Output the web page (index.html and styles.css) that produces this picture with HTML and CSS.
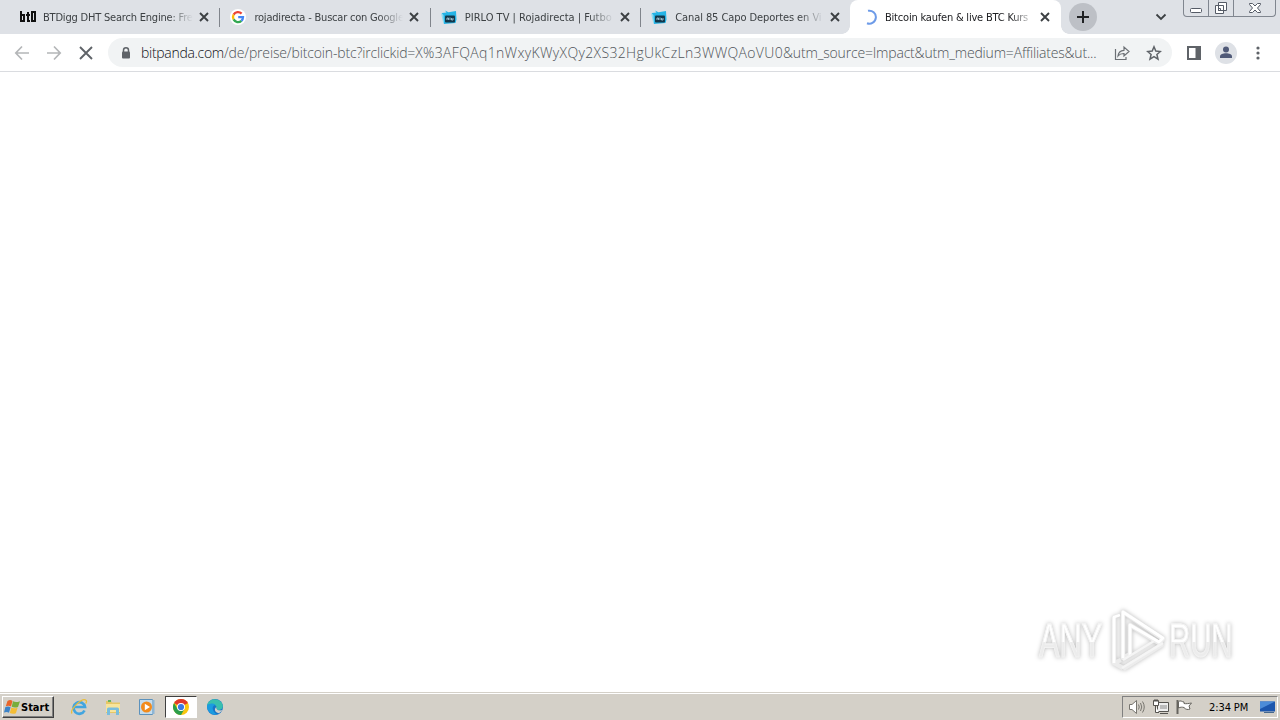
FILE: index.html
```html
<!DOCTYPE html>
<html lang="de">
<head>
    <meta charset="UTF-8">
    <title>Bitcoin kaufen &amp; live BTC Kurs</title>
    <link rel="stylesheet" href="styles.css">
</head>
<body>
    <svg class="defs" width="0" height="0">
        <symbol id="close" viewBox="0 0 10 10"><path d="M1 1l8 8M9 1l-8 8" fill="none" stroke="#3c4043" stroke-width="1.9"/></symbol>
        <symbol id="tv" viewBox="0 0 16 16">
            <path d="M1 4l4.500-.5L4 1.500l3.500 1.700L15 2l.5 8.500-1 3.500L3 15z" fill="#25b4e6"/>
            <path d="M0 4l2 9 1 2-.5-9z" fill="#8cdcf2"/>
            <rect x="4" y="6.500" width="10" height="7" rx="1" fill="#12374b"/>
            <path d="M6 11V9h1.500v2M9 8.500v2.500M10.500 9v2h1.500V9" fill="none" stroke="#b5d5e2" stroke-width=".8"/>
        </symbol>
    </svg>

    <div class="browser">
        <div class="tab-strip">
            <div class="tab">
                <svg class="favicon" viewBox="0 0 16 16"><path d="M1 2v10h3V6H1M8 3v9h2M6 6h4M12 3h3v9h-3z" fill="none" stroke="#111" stroke-width="2"/></svg>
                <span class="tab-title t1">BTDigg DHT Search Engine: Fre</span>
                <svg class="tab-close"><use href="#close"/></svg>
            </div>
            <div class="tab">
                <svg class="favicon" viewBox="0 0 16 16">
                    <circle cx="8" cy="8" r="8" fill="#fff"/>
                    <g fill="none" stroke-width="2.300">
                        <path d="M11.600 4.600A5 5 0 0 0 3.600 5.600" stroke="#ea4335"/>
                        <path d="M3.600 5.600a5 5 0 0 0 0 4.800" stroke="#fbbc05"/>
                        <path d="M3.600 10.400a5 5 0 0 0 7.800 1.400" stroke="#34a853"/>
                        <path d="M11.400 11.800A5 5 0 0 0 13 8.200H8.200" stroke="#4285f4"/>
                    </g>
                </svg>
                <span class="tab-title t2">rojadirecta - Buscar con Google</span>
                <svg class="tab-close"><use href="#close"/></svg>
            </div>
            <div class="tab">
                <svg class="favicon"><use href="#tv"/></svg>
                <span class="tab-title t3">PIRLO TV | Rojadirecta | Futbo</span>
                <svg class="tab-close"><use href="#close"/></svg>
            </div>
            <div class="tab">
                <svg class="favicon"><use href="#tv"/></svg>
                <span class="tab-title t4">Canal 85 Capo Deportes en Vi</span>
                <svg class="tab-close"><use href="#close"/></svg>
            </div>
            <div class="tab active">
                <svg class="favicon" viewBox="0 0 16 16"><path d="M6 1.800A6.500 6.500 0 1 1 5 14.200" fill="none" stroke="#6d9be8" stroke-width="2"/></svg>
                <span class="tab-title t5">Bitcoin kaufen &amp; live BTC Kurs</span>
                <svg class="tab-close"><use href="#close"/></svg>
            </div>
            <div class="new-tab">
                <svg width="14" height="14" viewBox="0 0 14 14"><path d="M7 1v12M1 7h12" stroke="#202124" stroke-width="2"/></svg>
            </div>
            <svg class="tab-search" width="12" height="8" viewBox="0 0 12 8"><path d="M1.500 1.500L6 6l4.500-4.500" fill="none" stroke="#3c4043" stroke-width="1.800"/></svg>
            <div class="window-controls">
                <div class="control"><svg width="14" height="14" viewBox="0 0 14 14"><rect x="1.500" y="7.500" width="11" height="4" rx="1" fill="#fff" stroke="#555b66"/></svg></div>
                <div class="control"><svg width="14" height="14" viewBox="0 0 14 14"><path d="M4.500 1.500h8v8h-8zM1.500 4.500h8v8h-8zM4.500 7.500h2v2h-2z" fill="#fff" stroke="#555b66"/></svg></div>
                <div class="control wide"><svg width="14" height="14" viewBox="0 0 14 14"><path d="M1.500 2.500h3L7 5l2.500-2.500h3v1L9.500 7l3 3.500v1h-3L7 9l-2.500 2.500h-3v-1l3-3.500-3-3.500z" fill="#fff" stroke="#555b66"/></svg></div>
            </div>
        </div>

        <div class="toolbar">
            <svg class="nav" viewBox="0 0 16 16"><path d="M15 8H2M8 1.500L1.800 8 8 14.500" fill="none" stroke="#b4b6b8" stroke-width="1.700"/></svg>
            <svg class="nav" viewBox="0 0 16 16"><path d="M1 8h13M8 1.500L14.200 8 8 14.500" fill="none" stroke="#b4b6b8" stroke-width="1.700"/></svg>
            <svg class="nav" viewBox="0 0 16 16"><path d="M2 2l12 12M14 2L2 14" fill="none" stroke="#5f6368" stroke-width="1.900"/></svg>
            <div class="address-bar">
                <svg class="lock" width="10" height="12" viewBox="0 0 10 12"><path d="M2.500 5V3.300a2.500 2.500 0 0 1 5 0V5" fill="none" stroke="#5f6368" stroke-width="1.500"/><rect x="1" y="4.500" width="8" height="7" rx="1" fill="#5f6368"/></svg>
                <div class="url"><span class="host">bitpanda.com</span><span class="path">/de/preise/bitcoin-btc?irclickid=</span><span class="click-id">X%3AFQAq1nWxyKWyXQy2XS32HgUkCzLn3WWQAoVU0</span><span class="utm">&amp;utm_source=Impact&amp;utm_medium=Affiliates&amp;ut...</span></div>
                <svg class="share" width="16" height="16" viewBox="0 0 16 16"><path d="M1.500 4v10.500H12V12M4 11c.3-3.800 2.300-5.500 6-5.700V2L15 6.500 10 11V8.500C7.500 8.400 5.600 9 4 11z" fill="none" stroke="#6b6f74" stroke-width="1.200"/></svg>
                <svg class="star" width="16" height="16" viewBox="0 0 16 16"><path d="M8 1.800l1.800 4.300 4.600.4-3.500 3 1.100 4.600L8 11.700l-4 2.400 1.100-4.600-3.500-3 4.600-.4z" fill="none" stroke="#5f6368" stroke-width="1.500"/></svg>
            </div>
            <svg class="panel" width="14" height="14" viewBox="0 0 14 14"><path d="M1 1h12v12H1z" fill="none" stroke="#5f6368" stroke-width="2"/><path d="M8.500 1H13v12H8.500z" fill="#5f6368"/></svg>
            <svg class="profile" width="22" height="22" viewBox="0 0 22 22"><circle cx="11" cy="11" r="11" fill="#dee1e6"/><circle cx="11" cy="7.500" r="3" fill="#505a78"/><path d="M5 16v-1.500c0-2 3-3.200 6-3.200s6 1.200 6 3.200V16z" fill="#505a78"/></svg>
            <svg class="menu" width="4" height="14" viewBox="0 0 4 14"><g fill="#5f6368"><circle cx="2" cy="2" r="1.600"/><circle cx="2" cy="7" r="1.600"/><circle cx="2" cy="12" r="1.600"/></g></svg>
        </div>

        <div class="page">
            <div class="watermark">
                <span class="mark-text any">ANY</span>
                <svg class="mark-logo" width="58" height="64" viewBox="0 0 58 64">
                    <g fill="none" stroke-linejoin="round">
                        <path d="M14 4v46l7-4V17l29 18 4-4zM5 9v46l7-3M14 61l40-25M5 55l9 5" stroke="#ececec" stroke-width="4.500"/>
                        <path d="M14 50V4l40 26-4 4-29-17v30M5 55V9l6-2" stroke="#fff" stroke-width="2.800"/>
                        <path d="M13 60l41-25M14 52l31-19" stroke="#f5f5f5" stroke-width="2.500"/>
                    </g>
                </svg>
                <span class="mark-text run">RUN</span>
            </div>
        </div>
    </div>

    <div class="taskbar">
        <div class="start">
            <svg width="17" height="16" viewBox="0 0 17 16">
                <path d="M3.500 2c2-1.300 3.500-1.100 5-.1L7 7.500c-1.700-1-3.400-1-5.200-.2z" fill="#e9652a"/>
                <path d="M9 2.300c2 1 4 1 7-.1l-2 5.800c-2.300.8-4.200.7-6.300-.2z" fill="#78ad3c"/>
                <path d="M1.400 8c2-.8 3.700-.7 5.200.2L5 13.800c-1.500-1-3.200-1-5-.2z" fill="#3c83c8"/>
                <path d="M7.400 8.600c2 1 3.900 1 6.200.1l-1.700 5.600c-2.200.8-4.200.7-6.100-.3z" fill="#f4bd35"/>
            </svg>
            <span>Start</span>
        </div>
        <div class="launchers">
            <div class="launcher">
                <svg width="18" height="18" viewBox="0 0 18 18"><path d="M14.500 12.500A5.800 5.800 0 1 1 15 9H5" fill="none" stroke="#42a5df" stroke-width="2.700"/><path d="M2 15.500C-.5 12 12-1 16 2.200c.8.600.5 2-.2 3.300" fill="none" stroke="#e8bd3c" stroke-width="1.300"/></svg>
            </div>
            <div class="launcher">
                <svg width="18" height="18" viewBox="0 0 18 18"><path d="M2 3h5l1 1.500h8V15H2z" fill="#e6c766"/><path d="M4 2h3v2H4z" fill="#66b35e"/><path d="M2 6h14v8H2z" fill="#f7e49b"/><path d="M3 17v-6q0-1.500 1.500-1.500h9q1.500 0 1.500 1.500v6h-3v-5H6v5z" fill="#79bddd"/></svg>
            </div>
            <div class="launcher">
                <svg width="18" height="18" viewBox="0 0 18 18"><path d="M1.500 1.500h13v15h-13z" fill="#c4dced" stroke="#5c92bd"/><path d="M14 2h2.500v14H14z" fill="#8db5d4"/><circle cx="8.500" cy="9" r="5.500" fill="#f28b1c"/><path d="M6.800 5.800v6.400L12 9z" fill="#fff"/></svg>
            </div>
            <div class="launcher pressed">
                <svg width="16" height="16" viewBox="0 0 16 16"><circle cx="8" cy="8" r="8" fill="#f9c60f"/><path d="M8 8L1.070 4A8 8 0 0 1 14.930 4z" fill="#df382c"/><path d="M1.070 4A8 8 0 0 0 8 16l3.500-6H4.500z" fill="#2b9e4b"/><circle cx="8" cy="8" r="4" fill="#fff"/><circle cx="8" cy="8" r="3.100" fill="#3979e4"/></svg>
            </div>
            <div class="launcher">
                <svg width="16" height="16" viewBox="0 0 16 16"><circle cx="8" cy="8" r="8" fill="#1874c8"/><path d="M0 7C1-.500 10-2 14.500 3.500 17.500 8 15 11 11.500 11 9 11 9 9.800 9.600 9 10 6 4 3 0 7z" fill="#39bfae"/><path d="M0 7c2-3 6-3 8.500-1C5 6 4 12 10 15.700 4 16.500 0 12 0 7z" fill="#1b9ce0"/><path d="M9.500 8c-1 3 3 4 5.700 3-1 1.800-2.300 2.800-3.500 3.200C8 13.500 6.500 10 9.500 8z" fill="#d4d0c8"/></svg>
            </div>
        </div>
        <div class="tray">
            <svg width="18" height="16" viewBox="0 0 18 16"><path d="M1.500 5.500H4L8.500 1.500v13L4 10.500H1.500z" fill="#fff" stroke="#77756f"/><path d="M10.500 5.500q1.500 2.500 0 5M12.500 4q2.500 4 0 8M14.500 2.500q3.500 5.500 0 11" fill="none" stroke="#77756f"/></svg>
            <svg width="16" height="16" viewBox="0 0 16 16"><path d="M4.500 3.500h11v9h-11zM7 14.500h8" fill="#eee" stroke="#55534f"/><path d="M.5 1.500h5v5h-5zM2 0v3M4 0v3M2.500 6.500v7H6" fill="#fff" stroke="#55534f"/><path d="M7 6h7v4H7z" fill="#bbb"/></svg>
            <svg width="16" height="16" viewBox="0 0 16 16"><path d="M1.500 1v14" stroke="#66645f" stroke-width="2"/><path d="M2.500 2.500c2-1.500 3.500.3 5.500.5v1.500c2 .5 4.500 0 7.500-.5l-2.500 3 1 3c-2 1-4.500.5-6-1.500-2-.5-3.500-.5-5.500.5z" fill="#fff" stroke="#66645f"/></svg>
            <span class="clock">2:34 PM</span>
            <svg width="15" height="14" viewBox="0 0 15 14"><path d="M0 1.500h15v10H0z" fill="#1c56ad"/><path d="M0 1.500h15L0 9z" fill="#4c8cd8"/><path d="M4 12.500h10" stroke="#46688e"/></svg>
        </div>
    </div>
</body>
</html>
```
FILE: styles.css
```css
* {
    box-sizing: border-box;
}
body {
    margin: 0;
    width: 1280px;
    height: 720px;
    display: flex;
    flex-direction: column;
    overflow: hidden;
    background: #fff;
    font-family: "DejaVu Sans Condensed", "DejaVu Sans", sans-serif;
    font-stretch: condensed;
}
svg {
    display: block;
    flex: none;
}
.defs {
    position: absolute;
}
.browser {
    flex: 1;
    display: flex;
    flex-direction: column;
}
.tab-strip {
    display: flex;
    height: 34px;
    padding-left: 10px;
    background: #dee1e6;
}
.tab {
    display: flex;
    align-items: center;
    width: 210.4px;
    height: 34px;
    padding-left: 10px;
    flex: none;
    background: linear-gradient(#80848b, #80848b) right 8px / 1px 19px no-repeat;
}
.tab:nth-child(4) {
    background: none;
}
.tab.active {
    position: relative;
    width: 211px;
    margin-left: -1.6px;
    padding-left: 12px;
    background: #fff;
    border-radius: 8px 8px 0 0;
}
.tab.active::before,
.tab.active::after {
    content: "";
    position: absolute;
    bottom: 0;
    width: 8px;
    height: 8px;
}
.tab.active::before {
    left: -8px;
    background: radial-gradient(circle at 0 0, transparent 7.5px, #fff 8px);
}
.tab.active::after {
    right: -8px;
    background: radial-gradient(circle at 100% 0, transparent 7.5px, #fff 8px);
}
.favicon {
    width: 16px;
    height: 16px;
}
.tab-title {
    width: 150px;
    margin-left: 7px;
    white-space: nowrap;
    font-size: 11px;
    line-height: 16px;
    padding-top: 1px;
    color: #3c4043;
    letter-spacing: -0.2px;
    -webkit-mask-image: linear-gradient(to right, #000 125px, transparent 150px);
    mask-image: linear-gradient(to right, #000 125px, transparent 150px);
}
.t2 {
    padding-left: 1px;
}
.t3 {
    padding-left: 1px;
    letter-spacing: 0;
}
.t4 {
    padding-left: 1px;
    letter-spacing: -0.08px;
}
.active .tab-title {
    color: #202124;
}
.tab-close {
    width: 10px;
    height: 10px;
    margin-left: 6px;
}
.active .tab-close {
    margin-left: 5px;
}
.new-tab {
    display: flex;
    align-items: center;
    justify-content: center;
    width: 28px;
    height: 28px;
    margin: 3px 0 0 8px;
    border-radius: 50%;
    background: #bdc0c6;
}
.tab-search {
    margin: 13px 0 0 58px;
}
.window-controls {
    display: flex;
    width: 93px;
    height: 17px;
    margin: 0 4px 0 auto;
    border: 1px solid #80868f;
    border-top: 0;
    border-radius: 0 0 4px 4px;
}
.control {
    display: flex;
    justify-content: center;
    width: 25px;
    padding-top: 1px;
    border-right: 1px solid #80868f;
}
.control.wide {
    flex: 1;
    border-right: 0;
}
.toolbar {
    display: flex;
    align-items: center;
    height: 38px;
    padding: 0 0 0 14px;
    border-bottom: 1px solid #dadce0;
}
.nav {
    width: 16px;
    height: 16px;
    margin-right: 16px;
}
.address-bar {
    display: flex;
    align-items: center;
    flex: none;
    width: 1064px;
    height: 29px;
    margin-left: -2px;
    padding-left: 13px;
    border-radius: 15px;
    background: #f1f3f4;
}
.url {
    width: 958px;
    margin-left: 10px;
    white-space: nowrap;
    font-family: "Open Sans", "Noto Sans", sans-serif;
    font-size: 14px;
    font-weight: 300;
    font-stretch: normal;
    line-height: 20px;
    color: #4f5358;
}
.host {
    color: #101114;
    letter-spacing: -0.3px;
}
.path {
    letter-spacing: -0.15px;
}
.click-id {
    letter-spacing: 0.34px;
}
.utm {
    letter-spacing: -0.18px;
}
.share {
    margin-left: 15px;
}
.star {
    margin-left: 16px;
}
.panel {
    margin-left: 15px;
}
.profile {
    margin-left: 14px;
}
.menu {
    margin-left: 19px;
}
.page {
    display: flex;
    flex: 1;
    align-items: flex-end;
    justify-content: flex-end;
    padding: 0 45px 20px 0;
}
.watermark {
    display: flex;
    align-items: center;
    width: 196px;
    height: 64px;
    filter: drop-shadow(0 0 2px #bbb);
}
.mark-text {
    flex: none;
    padding-top: 2px;
    font-family: "Liberation Sans", sans-serif;
    font-size: 48px;
    font-stretch: normal;
    line-height: 64px;
    background: linear-gradient(#fff 53%, #ececec 53%);
    -webkit-background-clip: text;
    background-clip: text;
    color: transparent;
    -webkit-text-stroke: 1px #f2f2f2;
    transform-origin: left;
}
.any {
    width: 100px;
    margin-right: -37px;
    transform: scaleX(.64);
}
.mark-logo {
    margin-left: 7px;
}
.run {
    width: 105px;
    margin-left: 2px;
    transform: scaleX(.61);
}
.taskbar {
    display: flex;
    align-items: center;
    height: 28px;
    padding: 2px 2px 0;
    background: #d4d0c8;
    box-shadow: inset 0 1px #d4d0c8, inset 0 2px #fff;
}
.start {
    display: flex;
    align-items: center;
    width: 52px;
    height: 22px;
    padding-left: 1px;
    border: 1px solid;
    border-color: #fff #404040 #404040 #fff;
    box-shadow: inset -1px -1px #808080;
    font-size: 11px;
    font-weight: bold;
    color: #000;
}
.launchers {
    display: flex;
    margin-left: 9px;
    gap: 2px;
}
.launcher {
    display: flex;
    align-items: center;
    justify-content: center;
    width: 32px;
    height: 22px;
}
.pressed {
    background: #fff;
    border: 1px solid;
    border-color: #404040 #fff #fff #404040;
}
.tray {
    display: flex;
    align-items: center;
    width: 156px;
    height: 22px;
    margin-left: auto;
    padding-left: 5px;
    gap: 7px;
    border: 1px solid;
    border-color: #808080 #fff #fff #808080;
}
.clock {
    width: 42px;
    margin: 0 2px 0 10px;
    font-size: 11px;
    letter-spacing: -0.1px;
    white-space: nowrap;
    color: #000;
}
```
